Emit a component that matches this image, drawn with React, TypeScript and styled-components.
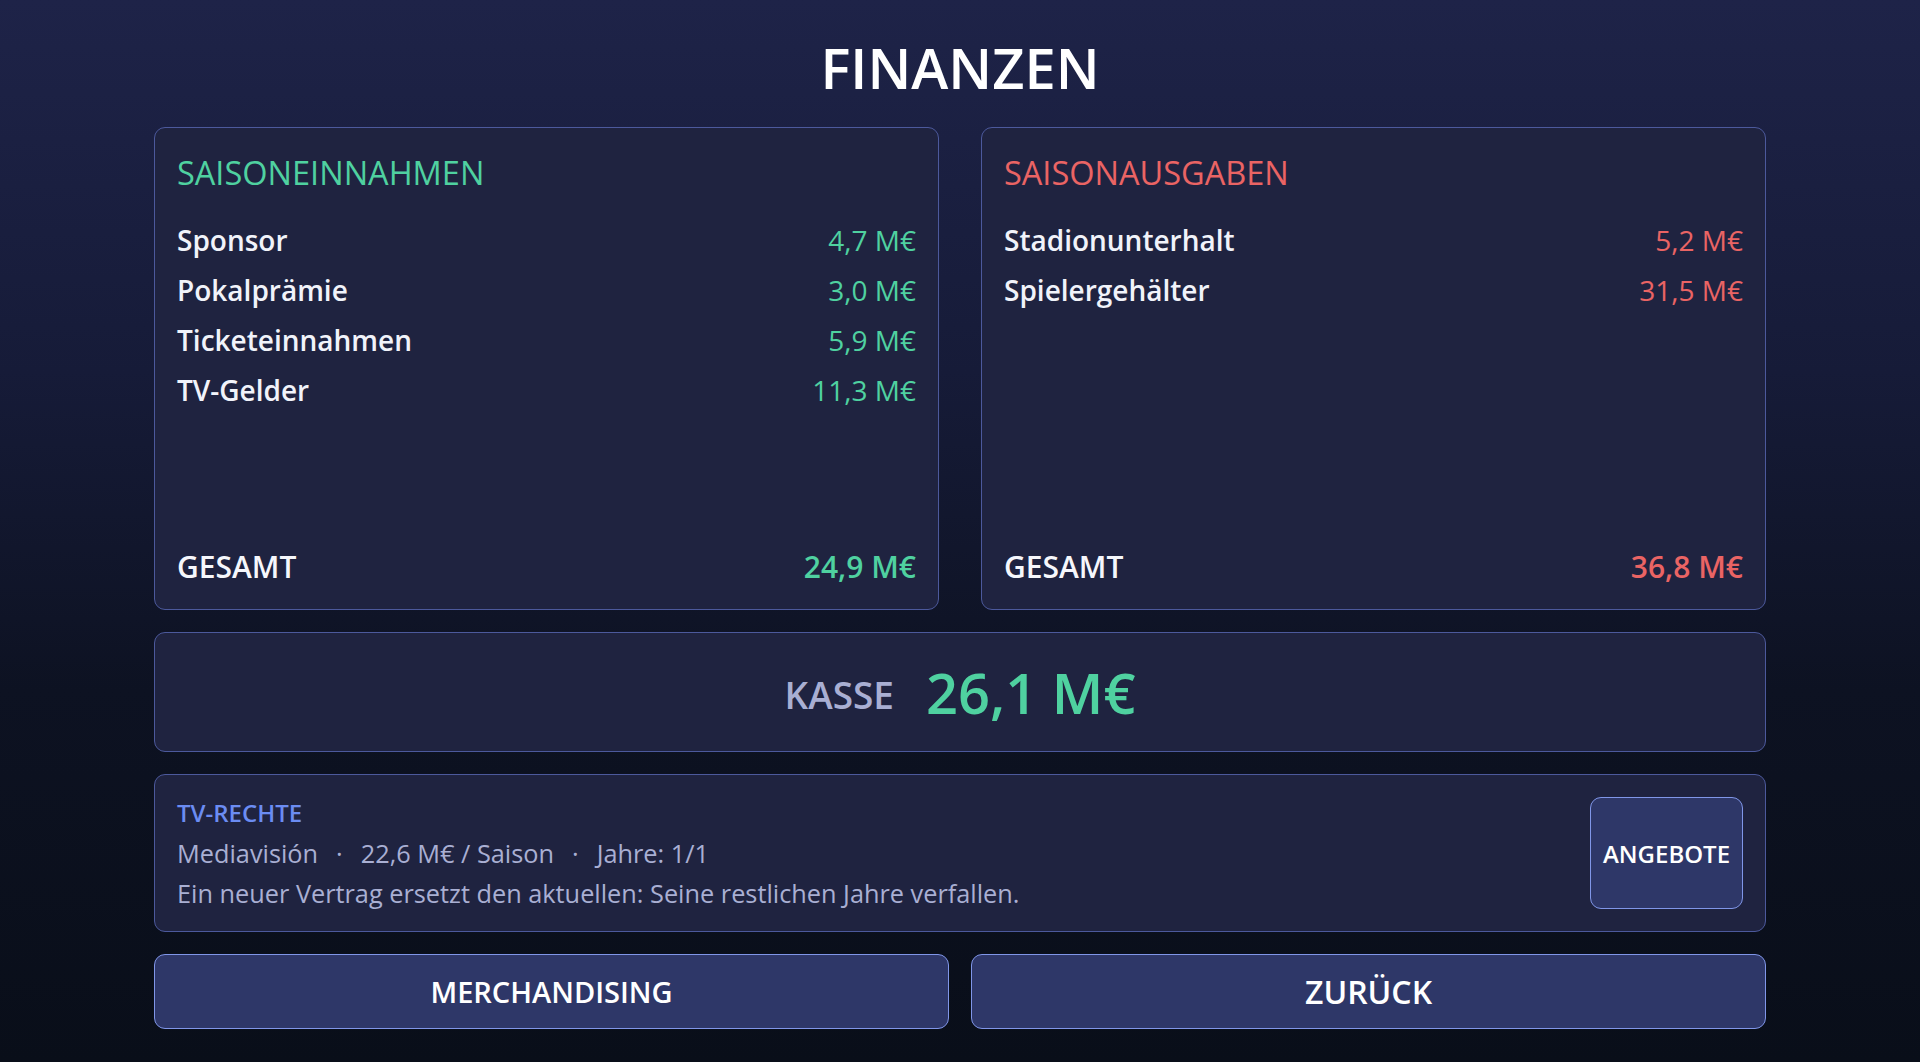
import styled, { createGlobalStyle } from "styled-components";

const GlobalStyle = createGlobalStyle`
  html, body {
    margin: 0;
    padding: 0;
    height: 100%;
  }
  body {
    font-family: "Open Sans", "Noto Sans", sans-serif;
    background: linear-gradient(180deg, #1e2348 0%, #161b38 35%, #0d1222 65%, #090e19 100%);
    color: #f1f3fa;
  }
`;

const income = [
  { label: "Sponsor", value: "4,7 M€" },
  { label: "Pokalprämie", value: "3,0 M€" },
  { label: "Ticketeinnahmen", value: "5,9 M€" },
  { label: "TV-Gelder", value: "11,3 M€" },
];

const expenses = [
  { label: "Stadionunterhalt", value: "5,2 M€" },
  { label: "Spielergehälter", value: "31,5 M€" },
];

const GREEN = "#4fd1a0";
const RED = "#ea6464";

function App() {
  return (
    <>
      <GlobalStyle />
      <Page>
        <Title>FINANZEN</Title>
        <Layout>
          <Columns>
            <Card>
              <CardHeading $color={GREEN}>SAISONEINNAHMEN</CardHeading>
              {income.map((row) => (
                <Row key={row.label}>
                  <Label>{row.label}</Label>
                  <Amount $color={GREEN}>{row.value}</Amount>
                </Row>
              ))}
              <TotalRow>
                <span>GESAMT</span>
                <Amount $color={GREEN}>24,9 M€</Amount>
              </TotalRow>
            </Card>
            <Card>
              <CardHeading $color={RED}>SAISONAUSGABEN</CardHeading>
              {expenses.map((row) => (
                <Row key={row.label}>
                  <Label>{row.label}</Label>
                  <Amount $color={RED}>{row.value}</Amount>
                </Row>
              ))}
              <TotalRow>
                <span>GESAMT</span>
                <Amount $color={RED}>36,8 M€</Amount>
              </TotalRow>
            </Card>
          </Columns>

          <Cash>
            <CashLabel>KASSE</CashLabel>
            <CashValue>26,1 M€</CashValue>
          </Cash>

          <TvPanel>
            <TvInfo>
              <TvHeading>TV-RECHTE</TvHeading>
              <TvLine>
                Mediavisión<Dot>·</Dot>22,6 M€ / Saison<Dot>·</Dot>Jahre: 1/1
              </TvLine>
              <TvLine>
                Ein neuer Vertrag ersetzt den aktuellen: Seine restlichen Jahre
                verfallen.
              </TvLine>
            </TvInfo>
            <OffersButton>ANGEBOTE</OffersButton>
          </TvPanel>

          <Actions>
            <ActionButton $size={29}>MERCHANDISING</ActionButton>
            <ActionButton $size={32}>ZURÜCK</ActionButton>
          </Actions>
        </Layout>
      </Page>
    </>
  );
}

export default App;

const Page = styled.div`
  min-height: 100vh;
  box-sizing: border-box;
  padding-top: 37px;
  display: flex;
  flex-direction: column;
  align-items: center;
`;

const Title = styled.h1`
  margin: 0 0 30px;
  font-size: 56px;
  line-height: 60px;
  font-weight: 600;
  color: #ffffff;
`;

const Layout = styled.div`
  width: 1612px;
  display: flex;
  flex-direction: column;
  gap: 22px;
`;

const Columns = styled.div`
  display: grid;
  grid-template-columns: 1fr 1fr;
  gap: 42px;
`;

const Panel = styled.div`
  box-sizing: border-box;
  background: #1f2340;
  border: 1.5px solid #4c599c;
  border-radius: 11px;
`;

const Card = styled(Panel)`
  height: 483px;
  padding: 27px 22px 23px;
  display: flex;
  flex-direction: column;
`;

const CardHeading = styled.div<{ $color: string }>`
  font-size: 32.5px;
  line-height: 36px;
  font-weight: 500;
  color: ${(p) => p.$color};
  margin-bottom: 24px;
`;

const Row = styled.div`
  display: flex;
  justify-content: space-between;
  align-items: center;
  height: 50px;
  font-size: 28px;
`;

const Label = styled.span`
  font-weight: 600;
  color: #f1f3fa;
`;

const Amount = styled.span<{ $color: string }>`
  font-weight: 500;
  color: ${(p) => p.$color};
`;

const TotalRow = styled.div`
  margin-top: auto;
  display: flex;
  justify-content: space-between;
  align-items: center;
  height: 40px;
  font-size: 30px;
  font-weight: 600;
  color: #f6f7fc;

  ${Amount} {
    font-weight: 600;
  }
`;

const Cash = styled(Panel)`
  height: 120px;
  display: flex;
  align-items: center;
  justify-content: center;
  gap: 32px;
`;

const CashLabel = styled.span`
  font-size: 37px;
  font-weight: 600;
  color: #a9afd3;
  padding-top: 4px;
`;

const CashValue = styled.span`
  font-size: 56px;
  font-weight: 600;
  color: ${GREEN};
`;

const TvPanel = styled(Panel)`
  height: 158px;
  padding: 0 22px;
  display: flex;
  align-items: center;
  justify-content: space-between;
`;

const TvInfo = styled.div`
  display: flex;
  flex-direction: column;
`;

const TvHeading = styled.div`
  font-size: 24px;
  line-height: 40px;
  font-weight: 600;
  color: #6b8cf2;
`;

const TvLine = styled.div`
  font-size: 25.3px;
  line-height: 40px;
  font-weight: 500;
  color: #a9afd3;
`;

const Dot = styled.span`
  margin: 0 18px;
`;

const Button = styled.button`
  font-family: inherit;
  background: #2e3768;
  border: 1.5px solid #8096e8;
  border-radius: 11px;
  color: #ffffff;
  cursor: pointer;
`;

const OffersButton = styled(Button)`
  width: 153px;
  height: 112px;
  font-size: 24px;
  font-weight: 600;
  padding: 0;
`;

const Actions = styled.div`
  display: grid;
  grid-template-columns: 1fr 1fr;
  gap: 22px;
`;

const ActionButton = styled(Button)<{ $size: number }>`
  height: 75px;
  font-size: ${(p) => p.$size}px;
  font-weight: 600;
`;
